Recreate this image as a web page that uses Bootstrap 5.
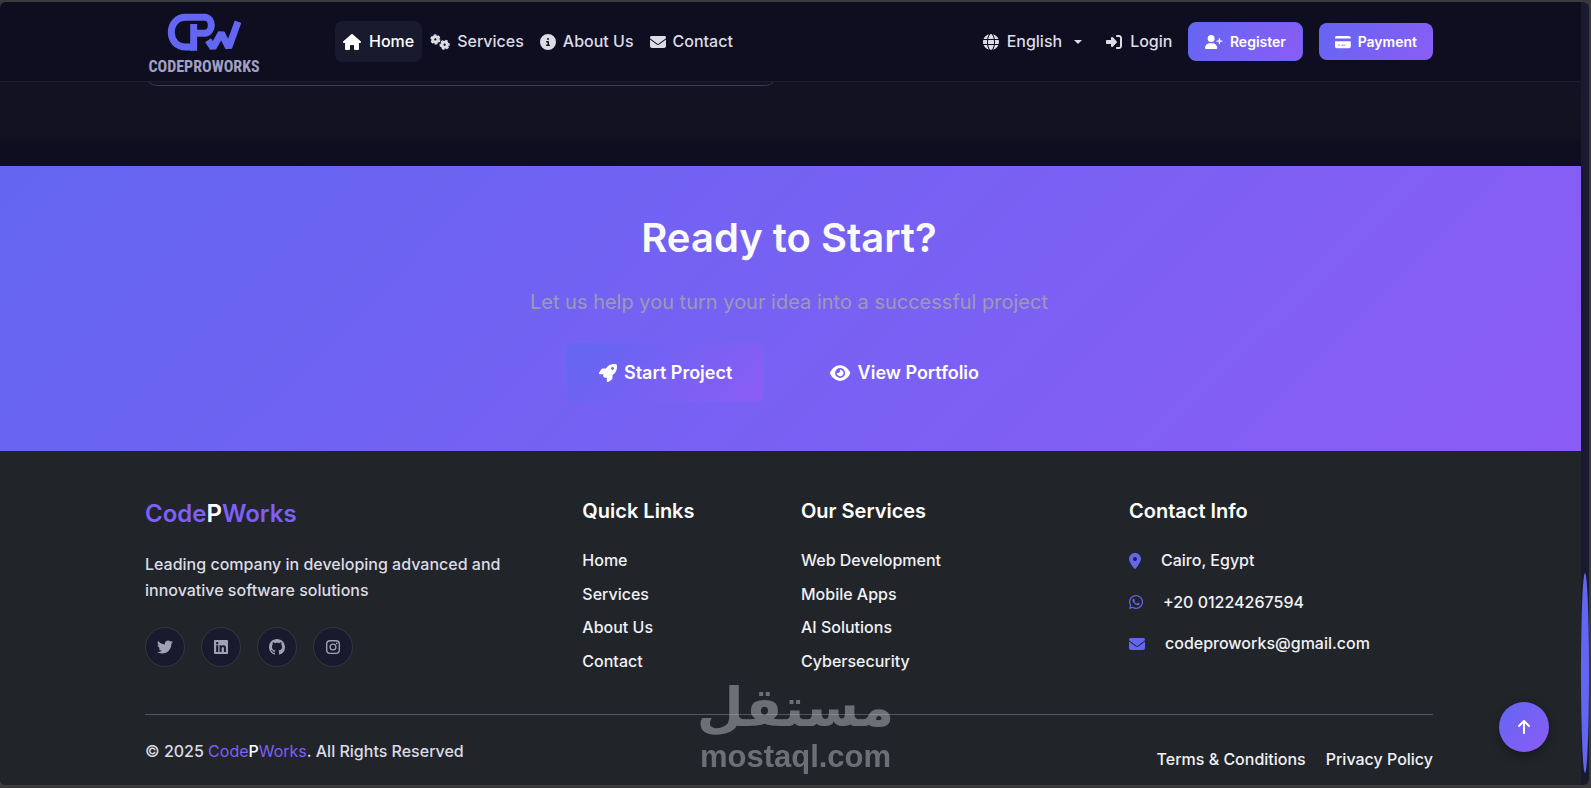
<!DOCTYPE html>
<html lang="en">
<head>
<meta charset="utf-8">
<meta name="viewport" content="width=device-width, initial-scale=1">
<title>CodeProWorks</title>
<link href="https://cdn.jsdelivr.net/npm/bootstrap@5.3.0/dist/css/bootstrap.min.css" rel="stylesheet">
<style>
  :root { --grad: linear-gradient(135deg, #6366f1 0%, #8b5cf6 100%); --ink: #0e0e20; }
  body { background: #3a3a3c; font-family: Inter, "Liberation Sans", sans-serif; font-size: 16px; line-height: 1.6; color: #fff; padding: 2px 2px 4px 0; }
  a { color: inherit; text-decoration: none; }
  .ico { height: 1em; width: auto; fill: currentColor; vertical-align: -2px; flex: none; }
  .frame { flex: 1; border-radius: 6px; overflow: hidden; background: #1a1a2e; }
  .page-col { min-width: 0; }
  .page-col .container { max-width: 1312px; }
  .shift { padding-right: 3px; }

  .site-head { background: var(--ink); height: 80px; border-bottom: 1px solid #1d1d30; z-index: 2; }
  .logo-box { width: 118px; margin-right: 72px; padding-top: 4px; }
  .logo-word { font: 700 16px/16px "Liberation Sans Narrow", "Roboto Condensed", "Liberation Sans", sans-serif; color: #a2a0c4; }
  .site-head .nav-link { padding: 8px; color: #dcdce6; font-weight: 500; border-radius: 8px; display: flex; align-items: center; gap: 8px; }
  .site-head nav .nav-link { gap: 7px; }
  .site-head .nav-link.active { background: #1a1a2e; color: #fff; gap: 8px; }
  .lang::after { margin-left: 4px; }
  .btn-grad { background: var(--grad); color: #fff; font-weight: 600; border-radius: 8px; border: 0; }
  .btn-grad:hover { color: #fff; }
  .btn-head { font-size: 14px; line-height: 21px; padding: 8px 16px; display: flex; align-items: center; gap: 7px; }
  .btn-reg { border: 1px solid #6366f1; }

  .tail { background: linear-gradient(#121222 0, #11111f 56px, #0e0e20 60px); height: 84px; overflow: hidden; }
  .tail-card { height: 24px; margin-top: -20px; border: 1px solid #3a3a40; border-radius: 16px; background: #131324; }

  .cta { background: var(--grad); padding-top: 48px; padding-bottom: 48px; }
  .cta h2 { font-size: 40px; line-height: 48px; font-weight: 600; color: #fafafa; }
  .cta p { font-size: 20px; line-height: 32px; color: #9b9bb4; }
  .btn-cta { font-size: 18px; line-height: 27px; padding: 16px 32px; font-weight: 600; border-radius: 8px; border: 1px solid transparent; color: #fff; display: inline-flex; align-items: center; gap: 7px; }
  .btn-cta.btn-grad { border-color: #6f66f6; }

  .site-foot { background: #212529; padding-top: 48px; padding-bottom: 12px; flex: 1; font-weight: 500; color: #f1f1f6; }
  .site-foot h4 { font-size: 24px; line-height: 29px; font-weight: 600; }
  .site-foot h5 { font-size: 20px; line-height: 25px; font-weight: 600; color: #fff; }
  .violet { color: #7e5ff7; }
  .soft { color: #dcdce6; }
  .social { width: 40px; height: 40px; border-radius: 50%; background: #1a1a2e; border: 1px solid #35373f; color: #a1a1b5; }
  .contacts .ico { color: #6366f1; margin-right: 20px; }
  .rule { border-top: 1px solid #53565c; margin-top: 40px; }

  .track { width: 8px; flex: none; padding-bottom: 12px; }
  .thumb { height: 26%; background: #6366f1; border-radius: 50%; }
  .to-top { position: fixed; right: 42px; bottom: 36px; width: 50px; height: 50px; border-radius: 50%; border: 0; background: var(--grad); color: #fff; box-shadow: 0 4px 12px rgba(0,0,0,.35); }
  .stamp { position: fixed; left: 0; right: 0; bottom: 16px; color: #b2b4bc; opacity: .52; pointer-events: none; text-align: center; }
  .stamp-ar { font: 700 54px/66px "DejaVu Sans", sans-serif; }
  .stamp-en { font: 700 31px/31px "Liberation Sans", sans-serif; }
</style>
</head>
<body class="min-vh-100 d-flex flex-column">
<svg class="d-none">
  <symbol id="i-mail" viewBox="0 0 512 512"><path d="M48 64C21.5 64 0 85.5 0 112c0 15.1 7.1 29.3 19.2 38.4L236.8 313.6c11.4 8.5 27 8.5 38.4 0L492.8 150.4c12.1-9.1 19.2-23.3 19.2-38.4c0-26.5-21.5-48-48-48H48zM0 176V384c0 35.3 28.7 64 64 64H448c35.3 0 64-28.7 64-64V176L294.4 339.2c-22.8 17.1-54 17.1-76.8 0L0 176z"/></symbol>
</svg>
<div class="frame d-flex">
  <div class="page-col flex-grow-1 d-flex flex-column">
    <header class="site-head shift position-relative">
      <div class="container h-100 d-flex align-items-center">
        <a href="#" class="logo-box d-flex flex-column align-items-center">
          <svg width="74" height="38" viewBox="78 24 222 114" fill="none" stroke="#6366f1" stroke-width="21" aria-hidden="true">
            <path d="M158 126H134C106 126 91 106 91 82C91 56 108 37 134 37H190C218 37 218 84 190 85H164"/>
            <path d="M158 57V137"/>
            <path d="M197 100L216 128L241 84L263 128L291 50" stroke="#0e0e20" stroke-width="30" stroke-linejoin="bevel"/>
            <path d="M201 106L216 128L241 84L263 128L291 50" stroke-width="21" stroke-linejoin="bevel"/>
          </svg>
          <span class="logo-word mt-2">CODEPROWORKS</span>
        </a>
        <nav class="d-flex me-auto">
          <a class="nav-link active" href="#"><svg class="ico" viewBox="0 0 576 512"><path d="M575.8 255.5c0 18-15 32.1-32 32.1h-32l.7 160.2c0 2.7-.2 5.4-.5 8.1V472c0 22.1-17.9 40-40 40H456c-1.1 0-2.2 0-3.3-.1c-1.4 .1-2.8 .1-4.2 .1H416 392c-22.1 0-40-17.9-40-40V448 384c0-17.7-14.3-32-32-32H256c-17.7 0-32 14.3-32 32v64 24c0 22.1-17.9 40-40 40H160 128.1c-1.5 0-3-.1-4.5-.2c-1.2 .1-2.4 .2-3.6 .2H104c-22.1 0-40-17.9-40-40V360c0-.9 0-1.9 .1-2.8V287.6H32c-18 0-32-14-32-32.1c0-9 3-17 10-24L266.4 8c7-7 15-8 22-8s15 2 21 7L564.8 231.5c8 7 12 15 11 24z"/></svg>Home</a>
          <a class="nav-link" href="#"><svg class="ico" viewBox="0 0 640 512"><g fill="none" stroke="currentColor"><g stroke-width="94"><circle cx="172" cy="172" r="84"/><circle cx="468" cy="344" r="84"/></g><g stroke-width="48" stroke-dasharray="88 57.4"><circle cx="172" cy="172" r="139"/><circle cx="468" cy="344" r="139" transform="rotate(30 468 344)"/></g></g></svg>Services</a>
          <a class="nav-link" href="#"><svg class="ico" viewBox="0 0 512 512"><path d="M256 512A256 256 0 1 0 256 0a256 256 0 1 0 0 512zM216 336h24V272H216c-13.3 0-24-10.7-24-24s10.7-24 24-24h48c13.3 0 24 10.7 24 24v88h8c13.3 0 24 10.7 24 24s-10.7 24-24 24H216c-13.3 0-24-10.7-24-24s10.7-24 24-24zm40-208a32 32 0 1 1 0 64 32 32 0 1 1 0-64z"/></svg>About Us</a>
          <a class="nav-link" href="#"><svg class="ico" viewBox="0 0 512 512"><use href="#i-mail"/></svg>Contact</a>
        </nav>
        <div class="d-flex align-items-center">
          <a class="nav-link lang dropdown-toggle me-2" href="#"><svg class="ico" viewBox="0 0 512 512"><path d="M352 256c0 22.2-1.2 43.6-3.3 64H163.3c-2.2-20.4-3.3-41.8-3.3-64s1.2-43.6 3.3-64H348.7c2.2 20.4 3.3 41.8 3.3 64zm28.8-64H503.9c5.3 20.5 8.1 41.9 8.1 64s-2.8 43.5-8.1 64H380.8c2.1-20.6 3.2-42 3.2-64s-1.1-43.4-3.2-64zm112.6-32H376.7c-10-63.9-29.8-117.4-55.3-151.6c78.3 20.7 142 77.5 171.9 151.6zm-149.1 0H167.7c6.1-36.4 15.5-68.6 27-94.7c10.5-23.6 22.2-40.7 33.5-51.5C239.4 3.2 248.7 0 256 0s16.6 3.2 27.8 13.8c11.3 10.8 23 27.9 33.5 51.5c11.6 26 20.9 58.2 27 94.7zm-209 0H18.6C48.6 85.9 112.2 29.1 190.6 8.4C165.1 42.6 145.3 96.1 135.3 160zM8.1 192H131.2c-2.1 20.6-3.2 42-3.2 64s1.1 43.4 3.2 64H8.1C2.8 299.5 0 278.1 0 256s2.8-43.5 8.1-64zM194.7 446.6c-11.6-26-20.9-58.2-27-94.6H344.3c-6.1 36.4-15.5 68.6-27 94.6c-10.5 23.6-22.2 40.7-33.5 51.5C272.6 508.8 263.3 512 256 512s-16.6-3.2-27.8-13.8c-11.3-10.8-23-27.9-33.5-51.5zM135.3 352c10 63.9 29.8 117.4 55.3 151.6C112.2 482.9 48.6 426.1 18.6 352H135.3zm358.1 0c-30 74.1-93.6 130.9-171.9 151.6c25.5-34.2 45.2-87.7 55.3-151.6H493.4z"/></svg>English</a>
          <a class="nav-link me-2" href="#"><svg class="ico" viewBox="0 0 512 512"><path d="M217.9 105.9L340.7 228.7c7.2 7.2 11.3 17.1 11.3 27.3s-4.1 20.1-11.3 27.3L217.9 406.1c-6.4 6.4-15 9.9-24 9.9c-18.7 0-33.9-15.2-33.9-33.9l0-62.1L32 320c-17.7 0-32-14.3-32-32l0-64c0-17.7 14.3-32 32-32l128 0 0-62.1c0-18.7 15.2-33.9 33.9-33.9c9 0 17.6 3.6 24 9.9zM352 416l64 0c17.7 0 32-14.3 32-32l0-256c0-17.7-14.3-32-32-32l-64 0c-17.7 0-32-14.3-32-32s14.3-32 32-32l64 0c53 0 96 43 96 96l0 256c0 53-43 96-96 96l-64 0c-17.7 0-32-14.3-32-32s14.3-32 32-32z"/></svg>Login</a>
          <a class="btn btn-grad btn-head btn-reg me-3" href="#"><svg class="ico" viewBox="0 0 640 512"><path d="M96 128a128 128 0 1 1 256 0A128 128 0 1 1 96 128zM0 482.3C0 383.8 79.8 304 178.3 304h91.4C368.2 304 448 383.8 448 482.3c0 16.4-13.3 29.7-29.7 29.7H29.7C13.3 512 0 498.7 0 482.3zM504 312V248H440c-13.3 0-24-10.7-24-24s10.7-24 24-24h64V136c0-13.3 10.7-24 24-24s24 10.7 24 24v64h64c13.3 0 24 10.7 24 24s-10.7 24-24 24H552v64c0 13.3-10.7 24-24 24s-24-10.7-24-24z"/></svg>Register</a>
          <a class="btn btn-grad btn-head" href="#"><svg class="ico" viewBox="0 0 576 512"><path d="M64 32C28.7 32 0 60.7 0 96v32H576V96c0-35.3-28.7-64-64-64H64zM576 224H0V416c0 35.3 28.7 64 64 64H512c35.3 0 64-28.7 64-64V224zM112 352h64c8.8 0 16 7.2 16 16s-7.2 16-16 16H112c-8.8 0-16-7.2-16-16s7.2-16 16-16zm112 16c0-8.8 7.2-16 16-16H368c8.8 0 16 7.2 16 16s-7.2 16-16 16H240c-8.8 0-16-7.2-16-16z"/></svg>Payment</a>
        </div>
      </div>
    </header>

    <section class="tail shift">
      <div class="container"><div class="row"><div class="col-6"><div class="tail-card"></div></div></div></div>
    </section>

    <section class="cta shift text-center">
      <div class="container">
        <h2 class="mb-4">Ready to Start?</h2>
        <p class="mb-4">Let us help you turn your idea into a successful project</p>
        <div class="d-flex justify-content-center">
          <a class="btn btn-cta btn-grad me-3" href="#"><svg class="ico" viewBox="0 0 512 512"><path d="M156.6 384.9L125.7 354c-8.5-8.5-11.5-20.8-7.7-32.2c3-8.9 7-20.5 11.8-33.8L24 288c-8.6 0-16.6-4.6-20.9-12.1s-4.2-16.7 .2-24.1l52.5-88.5c13-21.9 36.5-35.3 61.9-35.3l82.3 0c2.4-4 4.8-7.7 7.2-11.3C289.1-4.1 411.1-8.1 483.9 5.3c11.6 2.1 20.6 11.2 22.8 22.8c13.4 72.9 9.3 194.8-111.4 276.7c-3.5 2.4-7.3 4.8-11.3 7.2v82.3c0 25.4-13.4 49-35.3 61.9l-88.5 52.5c-7.4 4.4-16.6 4.5-24.1 .2s-12.1-12.2-12.1-20.9V380.8c-14.1 4.9-26.4 8.9-35.7 11.9c-11.2 3.6-23.4 .5-31.8-7.8zM384 168a40 40 0 1 0 0-80 40 40 0 1 0 0 80z"/></svg>Start Project</a>
          <a class="btn btn-cta ms-3" href="#"><svg class="ico" viewBox="0 0 576 512"><path d="M288 32c-80.8 0-145.5 36.8-192.6 80.6C48.6 156 17.3 208 2.5 243.7c-3.3 7.9-3.3 16.7 0 24.6C17.3 304 48.6 356 95.4 399.4C142.5 443.2 207.2 480 288 480s145.5-36.8 192.6-80.6c46.8-43.5 78.1-95.4 93-131.1c3.3-7.9 3.3-16.7 0-24.6c-14.9-35.7-46.2-87.7-93-131.1C433.5 68.8 368.8 32 288 32zM144 256a144 144 0 1 1 288 0 144 144 0 1 1 -288 0zm144-64c0 35.3-28.7 64-64 64c-7.1 0-13.9-1.2-20.3-3.3c-5.5-1.8-11.9 1.6-11.7 7.4c.3 6.9 1.3 13.8 3.2 20.7c13.7 51.2 66.4 81.6 117.6 67.9s81.6-66.4 67.9-117.6c-11.1-41.5-47.8-69.4-88.6-71.1c-5.8-.2-9.2 6.1-7.4 11.7c2.1 6.4 3.3 13.2 3.3 20.3z"/></svg>View Portfolio</a>
        </div>
      </div>
    </section>

    <footer class="site-foot shift">
      <div class="container">
        <div class="row">
          <div class="col-4">
            <h4 class="mb-4 violet">Code<span class="text-white">P</span>Works</h4>
            <p class="mb-4 soft">Leading company in developing advanced and innovative software solutions</p>
            <div class="d-flex gap-3">
              <a href="#" aria-label="Twitter" class="social d-flex align-items-center justify-content-center"><svg class="ico" viewBox="0 0 512 512"><path d="M459.37 151.716c.325 4.548.325 9.097.325 13.645 0 138.72-105.583 298.558-298.558 298.558-59.452 0-114.68-17.219-161.137-47.106 8.447.974 16.568 1.299 25.34 1.299 49.055 0 94.213-16.568 130.274-44.832-46.132-.975-84.792-31.188-98.112-72.772 6.498.974 12.995 1.624 19.818 1.624 9.421 0 18.843-1.3 27.614-3.573-48.081-9.747-84.143-51.98-84.143-102.985v-1.299c13.969 7.797 30.214 12.67 47.431 13.319-28.264-18.843-46.781-51.005-46.781-87.391 0-19.492 5.197-37.36 14.294-52.954 51.655 63.675 129.3 105.258 216.365 109.807-1.624-7.797-2.599-15.918-2.599-24.04 0-57.828 46.782-104.934 104.934-104.934 30.213 0 57.502 12.67 76.67 33.137 23.715-4.548 46.456-13.32 66.599-25.34-7.798 24.366-24.366 44.833-46.132 57.827 21.117-2.273 41.584-8.122 60.426-16.243-14.292 20.791-32.161 39.308-52.628 54.253z"/></svg></a>
              <a href="#" aria-label="LinkedIn" class="social d-flex align-items-center justify-content-center"><svg class="ico" viewBox="0 0 448 512"><path d="M416 32H31.9C14.3 32 0 46.5 0 64.3v383.4C0 465.5 14.3 480 31.9 480H416c17.6 0 32-14.5 32-32.3V64.3c0-17.8-14.4-32.3-32-32.3zM135.4 416H69V202.2h66.5V416zm-33.2-243c-21.3 0-38.5-17.3-38.5-38.5S80.9 96 102.2 96c21.2 0 38.5 17.3 38.5 38.5 0 21.3-17.2 38.5-38.5 38.5zm282.1 243h-66.4V312c0-24.8-.5-56.7-34.5-56.7-34.6 0-39.9 27-39.9 54.9V416h-66.4V202.2h63.7v29.2h.9c8.9-16.8 30.6-34.5 62.9-34.5 67.2 0 79.7 44.3 79.7 101.9V416z"/></svg></a>
              <a href="#" aria-label="GitHub" class="social d-flex align-items-center justify-content-center"><svg class="ico" viewBox="0 0 16 16"><path d="M8 0C3.58 0 0 3.58 0 8c0 3.54 2.29 6.53 5.47 7.59.4.07.55-.17.55-.38 0-.19-.01-.82-.01-1.49-2.01.37-2.53-.49-2.69-.94-.09-.23-.48-.94-.82-1.13-.28-.15-.68-.52-.01-.53.63-.01 1.08.58 1.23.82.72 1.21 1.87.87 2.33.66.07-.52.28-.87.51-1.07-1.78-.2-3.64-.89-3.64-3.95 0-.87.31-1.59.82-2.15-.08-.2-.36-1.02.08-2.12 0 0 .67-.21 2.2.82.64-.18 1.32-.27 2-.27.68 0 1.36.09 2 .27 1.53-1.04 2.2-.82 2.2-.82.44 1.1.16 1.92.08 2.12.51.56.82 1.27.82 2.15 0 3.07-1.87 3.75-3.65 3.95.29.25.54.73.54 1.48 0 1.07-.01 1.93-.01 2.2 0 .21.15.46.55.38A8.013 8.013 0 0016 8c0-4.42-3.58-8-8-8z"/></svg></a>
              <a href="#" aria-label="Instagram" class="social d-flex align-items-center justify-content-center"><svg class="ico" viewBox="0 0 448 512"><g fill="none" stroke="currentColor" stroke-width="44"><rect x="22" y="54" width="404" height="404" rx="108"/><circle cx="224" cy="256" r="93"/></g><circle cx="343" cy="137" r="28"/></svg></a>
            </div>
          </div>
          <div class="col-2">
            <h5 class="mb-4">Quick Links</h5>
            <ul class="list-unstyled mb-0 d-flex flex-column gap-2">
              <li><a href="#">Home</a></li><li><a href="#">Services</a></li><li><a href="#">About Us</a></li><li><a href="#">Contact</a></li>
            </ul>
          </div>
          <div class="col-3">
            <h5 class="mb-4">Our Services</h5>
            <ul class="list-unstyled mb-0 d-flex flex-column gap-2">
              <li><a href="#">Web Development</a></li><li><a href="#">Mobile Apps</a></li><li><a href="#">AI Solutions</a></li><li><a href="#">Cybersecurity</a></li>
            </ul>
          </div>
          <div class="col-3">
            <h5 class="mb-4">Contact Info</h5>
            <ul class="contacts list-unstyled mb-0 d-flex flex-column gap-3">
              <li class="d-flex align-items-center"><svg class="ico" viewBox="0 0 384 512"><path d="M215.7 499.2C267 435 384 279.4 384 192C384 86 298 0 192 0S0 86 0 192c0 87.4 117 243 168.3 307.2c12.3 15.3 35.1 15.3 47.4 0zM192 128a64 64 0 1 1 0 128 64 64 0 1 1 0-128z"/></svg>Cairo, Egypt</li>
              <li class="d-flex align-items-center"><svg class="ico" viewBox="0 0 448 512"><path d="M380.9 97.1C339 55.1 283.2 32 223.9 32c-122.4 0-222 99.6-222 222 0 39.1 10.2 77.3 29.6 111L0 480l117.7-30.9c32.4 17.7 68.9 27 106.1 27h.1c122.3 0 224.1-99.6 224.1-222 0-59.3-25.2-115-67.1-157zm-157 341.6c-33.2 0-65.7-8.9-94-25.7l-6.7-4-69.8 18.3L72 359.2l-4.4-7c-18.5-29.4-28.2-63.3-28.2-98.2 0-101.7 82.8-184.5 184.6-184.5 49.3 0 95.6 19.2 130.4 54.1 34.8 34.9 56.2 81.2 56.1 130.5 0 101.8-84.9 184.6-186.6 184.6zm101.2-138.2c-5.5-2.8-32.8-16.2-37.9-18-5.1-1.9-8.8-2.8-12.5 2.8-3.7 5.6-14.3 18-17.6 21.8-3.2 3.7-6.5 4.2-12 1.4-32.6-16.3-54-29.1-75.5-66-5.7-9.8 5.7-9.1 16.3-30.3 1.8-3.7.9-6.9-.5-9.7-1.4-2.8-12.5-30.1-17.1-41.2-4.5-10.8-9.1-9.3-12.5-9.5-3.2-.2-6.9-.2-10.6-.2-3.7 0-9.7 1.4-14.8 6.9-5.1 5.6-19.4 19-19.4 46.3 0 27.3 19.9 53.7 22.6 57.4 2.8 3.7 39.1 59.7 94.8 83.8 35.2 15.2 49 16.5 66.6 13.9 10.7-1.6 32.8-13.4 37.4-26.4 4.6-13 4.6-24.1 3.2-26.4-1.3-2.5-5-3.9-10.5-6.6z"/></svg>+20 01224267594</li>
              <li class="d-flex align-items-center"><svg class="ico" viewBox="0 0 512 512"><use href="#i-mail"/></svg>codeproworks@gmail.com</li>
            </ul>
          </div>
        </div>
        <div class="rule pt-4 d-flex justify-content-between align-items-start">
          <p class="mb-0 soft">© 2025 <span class="violet fw-normal">Code</span><span class="text-white">P</span><span class="violet fw-normal">Works</span>. All Rights Reserved</p>
          <div class="mt-2 d-flex">
            <a class="me-3" href="#">Terms &amp; Conditions</a>
            <a class="ms-1" href="#">Privacy Policy</a>
          </div>
        </div>
      </div>
    </footer>
  </div>
  <div class="track d-flex flex-column justify-content-end"><div class="thumb"></div></div>
</div>

<div class="stamp">
  <div class="stamp-ar" lang="ar" dir="rtl">مستقل</div>
  <div class="stamp-en">mostaql.com</div>
</div>
<button class="to-top d-flex align-items-center justify-content-center" type="button" aria-label="Back to top"><svg class="ico" viewBox="0 0 384 512"><path d="M214.6 41.4c-12.5-12.5-32.8-12.5-45.3 0l-160 160c-12.5 12.5-12.5 32.8 0 45.3s32.8 12.5 45.3 0L160 141.2V448c0 17.7 14.3 32 32 32s32-14.3 32-32V141.2L329.4 246.6c12.5 12.5 32.8 12.5 45.3 0s12.5-32.8 0-45.3l-160-160z"/></svg></button>
<script src="https://cdn.jsdelivr.net/npm/bootstrap@5.3.0/dist/js/bootstrap.bundle.min.js"></script>
</body>
</html>
